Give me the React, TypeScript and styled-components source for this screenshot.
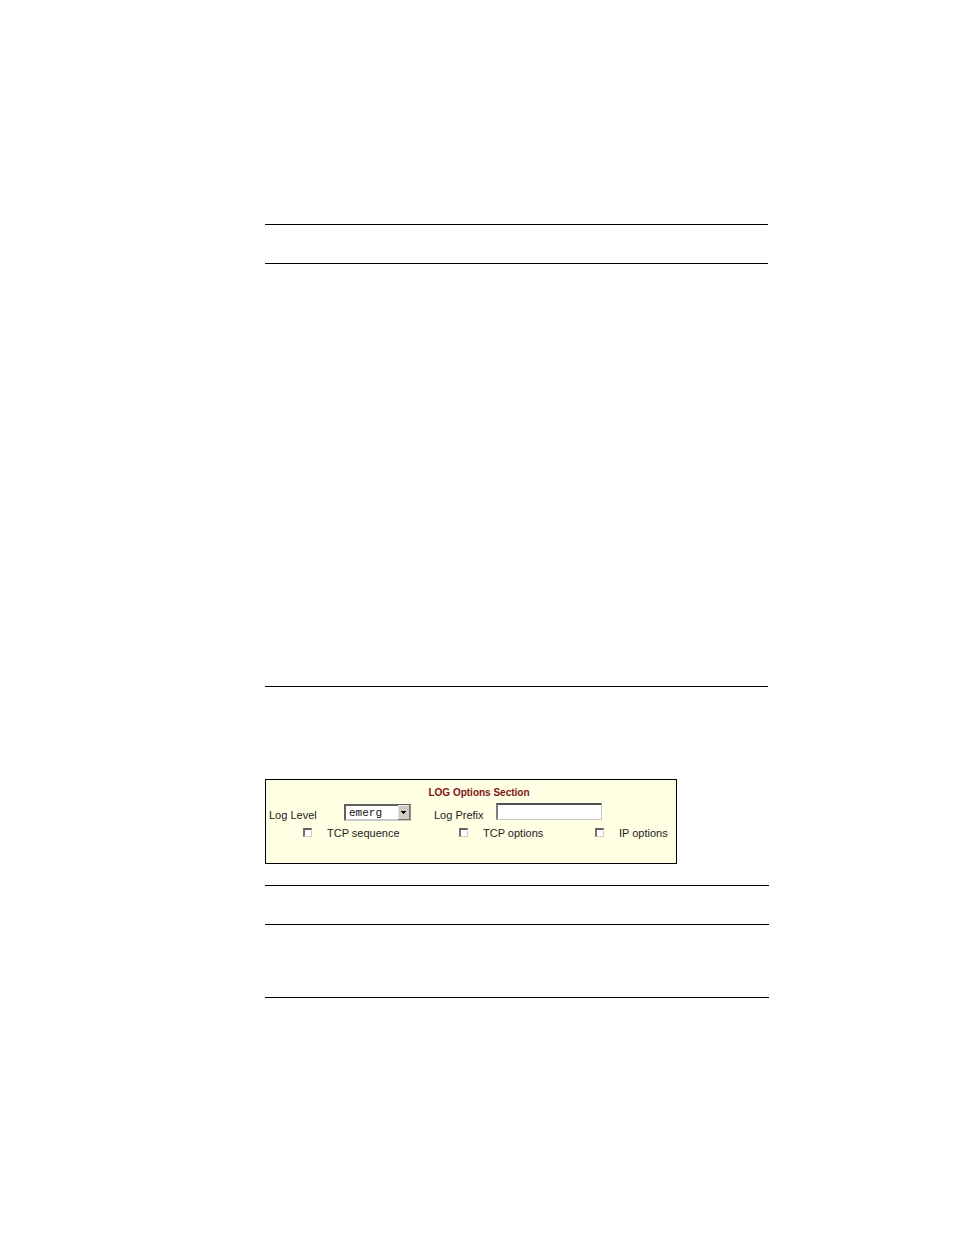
import React from "react";
import styled, { createGlobalStyle } from "styled-components";

const GlobalStyle = createGlobalStyle`
  *, *::before, *::after { box-sizing: border-box; }
  body { margin: 0; background: #fff; color: #222; font-family: "Liberation Sans", Arial, sans-serif; font-size: 11px; line-height: 14px; }
`;

const Page = styled.main`
  min-height: 100vh;
  padding: 224px 185px 64px 265px;
`;

const RuledBlock = styled.section<{ $inset?: boolean }>`
  border-bottom: 1px solid #000;
  margin-right: ${(p) => (p.$inset ? "1px" : "0")};
`;

const RuledHead = styled.header`
  height: 40px;
  border-top: 1px solid #000;
  border-bottom: 1px solid #000;
`;

const RuledBody = styled.div<{ $space: number }>`
  min-height: ${(p) => p.$space}px;
`;

const Panel = styled.form`
  max-width: 412px;
  margin: 92px 0 21px;
  padding: 6px 3px 23px;
  border: 1px solid #000;
  background: #ffffe3;
`;

const Title = styled.h2`
  margin: 0 0 3px;
  padding-left: 16px;
  font-size: 10px;
  line-height: 14px;
  font-weight: bold;
  text-align: center;
  color: #7e1420;
`;

const FieldRow = styled.div`
  display: grid;
  grid-template-columns: 75px 90px 62px 106px;
  align-items: center;
`;

const FieldLabel = styled.label`
  padding-top: 5px;
  white-space: nowrap;
`;

const SelectBox = styled.div`
  position: relative;
  width: 67px;
  height: 17px;
`;

const Select = styled.select`
  appearance: none;
  display: block;
  width: 100%;
  height: 100%;
  margin: 0;
  padding: 1px 14px 0 3px;
  border: 2px solid;
  border-color: #606060 #909090 #c8c8c8 #606060;
  border-radius: 0;
  background: #fff;
  color: #111;
  font-family: "Liberation Mono", "Courier New", monospace;
  font-size: 11px;
  line-height: 12px;
`;

const SelectArrow = styled.svg`
  position: absolute;
  top: 1px;
  right: 1px;
  width: 12px;
  height: 15px;
  pointer-events: none;
`;

const TextInput = styled.input`
  width: 106px;
  height: 17px;
  margin: 0 0 2px;
  padding: 0 3px;
  border: 1px solid;
  border-width: 2px 1px 1px 2px;
  border-color: #505050 #c8c8c8 #c8c8c8 #808080;
  border-radius: 0;
  background: #fff;
  font: inherit;
  outline: none;
`;

const CheckRow = styled.div`
  display: grid;
  grid-template-columns: 156px 136px 1fr;
  padding: 4px 0 0 34px;
`;

const CheckLabel = styled.label`
  display: flex;
  align-items: flex-start;
  gap: 15px;
  white-space: nowrap;
`;

const Checkbox = styled.input`
  appearance: none;
  flex: none;
  width: 9px;
  height: 9px;
  margin: 2px 0 0;
  border: 1px solid;
  border-width: 2px 1px 1px 2px;
  border-color: #606060 #d0d0d0 #d0d0d0 #707070;
  background: #fff;

  &:checked { background: #333; }
`;

const options = ["TCP sequence", "TCP options", "IP options"];

export default function App() {
  return (
    <>
      <GlobalStyle />
      <Page>
        <RuledBlock $inset>
          <RuledHead />
          <RuledBody $space={422} />
        </RuledBlock>

        <Panel>
          <Title>LOG Options Section</Title>
          <FieldRow>
            <FieldLabel htmlFor="log-level">Log Level</FieldLabel>
            <SelectBox>
              <Select id="log-level" defaultValue="emerg">
                <option value="emerg">emerg</option>
              </Select>
              <SelectArrow viewBox="0 0 12 15" shapeRendering="crispEdges" aria-hidden="true">
                <rect width="12" height="15" fill="#77736f" />
                <rect width="11" height="14" fill="#e8e4df" />
                <rect x="1" y="1" width="10" height="13" fill="#cfcac4" />
                <path d="M3 6h5v1h-1v1h-1v1h-1v-1h-1v-1h-1z" fill="#000" />
              </SelectArrow>
            </SelectBox>
            <FieldLabel htmlFor="log-prefix">Log Prefix</FieldLabel>
            <TextInput id="log-prefix" type="text" />
          </FieldRow>
          <CheckRow>
            {options.map((name) => (
              <CheckLabel key={name}>
                <Checkbox type="checkbox" />
                {name}
              </CheckLabel>
            ))}
          </CheckRow>
        </Panel>

        <RuledBlock>
          <RuledHead />
          <RuledBody $space={72} />
        </RuledBlock>
      </Page>
    </>
  );
}
